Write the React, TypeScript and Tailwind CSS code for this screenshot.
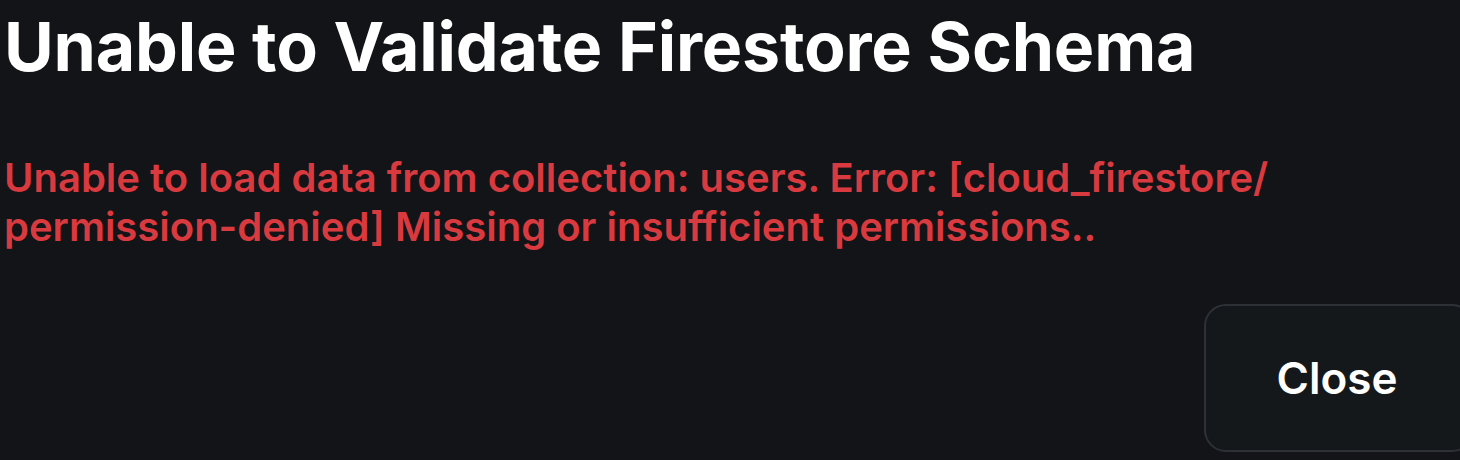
import React from 'react';

const App: React.FC = () => {
  return (
    <div className="w-[1460px] h-[460px] bg-[#121417] overflow-hidden flex flex-col font-['Inter',sans-serif]">
      <h1 className="pl-[4px] pt-[6px] text-[68px] leading-[80px] font-bold text-white tracking-[-0.2px]">
        Unable to Validate Firestore Schema
      </h1>
      <p className="pl-[4px] mt-[67px] text-[40px] leading-[49px] font-semibold text-[#d93a3f]">
        Unable to load data from collection: users. Error: [cloud_firestore/
        <br />
        permission-denied] Missing or insufficient permissions..
      </p>
      <div className="mt-auto flex justify-end">
        <button className="w-[270px] h-[148px] mb-[8px] mr-[-14px] rounded-[22px] border-2 border-[#2d3136] bg-[#15181b] text-white text-[44px] font-semibold pr-[4px]">
          Close
        </button>
      </div>
    </div>
  );
};

export default App;
